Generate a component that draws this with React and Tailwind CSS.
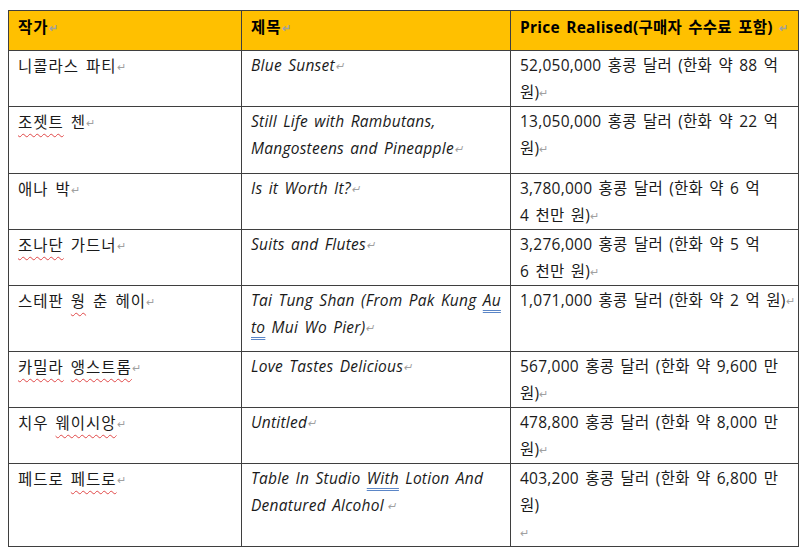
import React from "react";

const Mark = ({ space = false }) => (
  <span className="text-[11px] text-[#a0a0a0] align-[1px] tracking-normal [word-spacing:0]">{space ? " " : ""}↵</span>
);

const Wavy = ({ children }) => (
  <span className="underline decoration-wavy decoration-[#e04848] decoration-1 underline-offset-[5px]">
    {children}
  </span>
);

const Dbl = ({ children }) => (
  <span className="underline decoration-double decoration-[#5b86c7] decoration-1 underline-offset-[4px]">
    {children}
  </span>
);

const rows = [
  {
    h: "h-[55px]",
    artist: <>니콜라스 파티</>,
    title: [<>Blue Sunset</>],
    price: ["52,050,000 홍콩 달러 (한화 약 88 억", "원)"],
  },
  {
    h: "h-[67px]",
    artist: <><Wavy>조젯트</Wavy> 첸</>,
    title: [<>Still Life with Rambutans,</>, <>Mangosteens and Pineapple</>],
    price: ["13,050,000 홍콩 달러 (한화 약 22 억", "원)"],
  },
  {
    h: "h-[56px]",
    artist: <>애나 박</>,
    title: [<>Is it Worth It?</>],
    price: ["3,780,000 홍콩 달러 (한화 약 6 억", "4 천만 원)"],
  },
  {
    h: "h-[55px]",
    artist: <><Wavy>조나단</Wavy> 가드너</>,
    title: [<>Suits and Flutes</>],
    price: ["3,276,000 홍콩 달러 (한화 약 5 억", "6 천만 원)"],
  },
  {
    h: "h-[66px]",
    artist: <>스테판 <Wavy>웡</Wavy> 춘 헤이</>,
    title: [
      <>Tai Tung Shan (From Pak Kung <Dbl>Au</Dbl></>,
      <><Dbl>to</Dbl> Mui Wo Pier)</>,
    ],
    price: ["1,071,000 홍콩 달러 (한화 약 2 억 원)"],
  },
  {
    h: "h-[55px]",
    artist: <><Wavy>카밀라</Wavy> <Wavy>앵스트롬</Wavy></>,
    title: [<>Love Tastes Delicious</>],
    price: ["567,000 홍콩 달러 (한화 약 9,600 만", "원)"],
  },
  {
    h: "h-[55px]",
    artist: <>치우 <Wavy>웨이시앙</Wavy></>,
    title: [<>Untitled</>],
    price: ["478,800 홍콩 달러 (한화 약 8,000 만", "원)"],
  },
  {
    h: "h-[82px]",
    artist: <>페드로 <Wavy>페드로</Wavy></>,
    title: [<>Table In Studio <Dbl>With</Dbl> Lotion And</>, <>Denatured Alcohol</>],
    titleSpace: true,
    price: ["403,200 홍콩 달러 (한화 약 6,800 만", "원)", ""],
  },
];

const cell = "border border-[#3f3f3f] align-top px-[9px] pt-[1px] leading-[27px]";

export default function App() {
  return (
    <div
      className="w-[800px] h-[555px] bg-white pt-[10px] pl-[8px] text-[15.5px] text-[#1a1a1a] tracking-[0.25px] [word-spacing:2px]"
      style={{ fontFamily: '"Open Sans", "Noto Sans CJK KR", sans-serif' }}
    >
      <table className="table-fixed border-collapse w-[790px]">
        <colgroup>
          <col className="w-[233px]" />
          <col className="w-[269px]" />
          <col className="w-[288px]" />
        </colgroup>
        <thead>
          <tr className="h-[40px] bg-[#ffc000] font-bold text-black">
            <th className={`${cell} text-left pt-[3px] tracking-[1px]`}>
              작가<Mark />
            </th>
            <th className={`${cell} text-left pt-[3px] tracking-[1px]`}>
              제목<Mark />
            </th>
            <th className={`${cell} text-left pt-[3px] whitespace-nowrap`}>
              Price Realised(구매자 수수료 포함) <Mark />
            </th>
          </tr>
        </thead>
        <tbody>
          {rows.map((r, i) => (
            <tr key={i} className={r.h}>
              <td className={`${cell} pt-[2px] tracking-[1px]`}>
                {r.artist}
                <Mark />
              </td>
              <td className={`${cell} italic`}>
                {r.title.map((t, j) => (
                  <div key={j} className="whitespace-nowrap">
                    {t}
                    {j === r.title.length - 1 && <Mark space={r.titleSpace} />}
                  </div>
                ))}
              </td>
              <td className={cell}>
                {r.price.map((p, j) => (
                  <div key={j} className="whitespace-nowrap">
                    {p}
                    {j === r.price.length - 1 && <Mark />}
                  </div>
                ))}
              </td>
            </tr>
          ))}
        </tbody>
      </table>
    </div>
  );
}
